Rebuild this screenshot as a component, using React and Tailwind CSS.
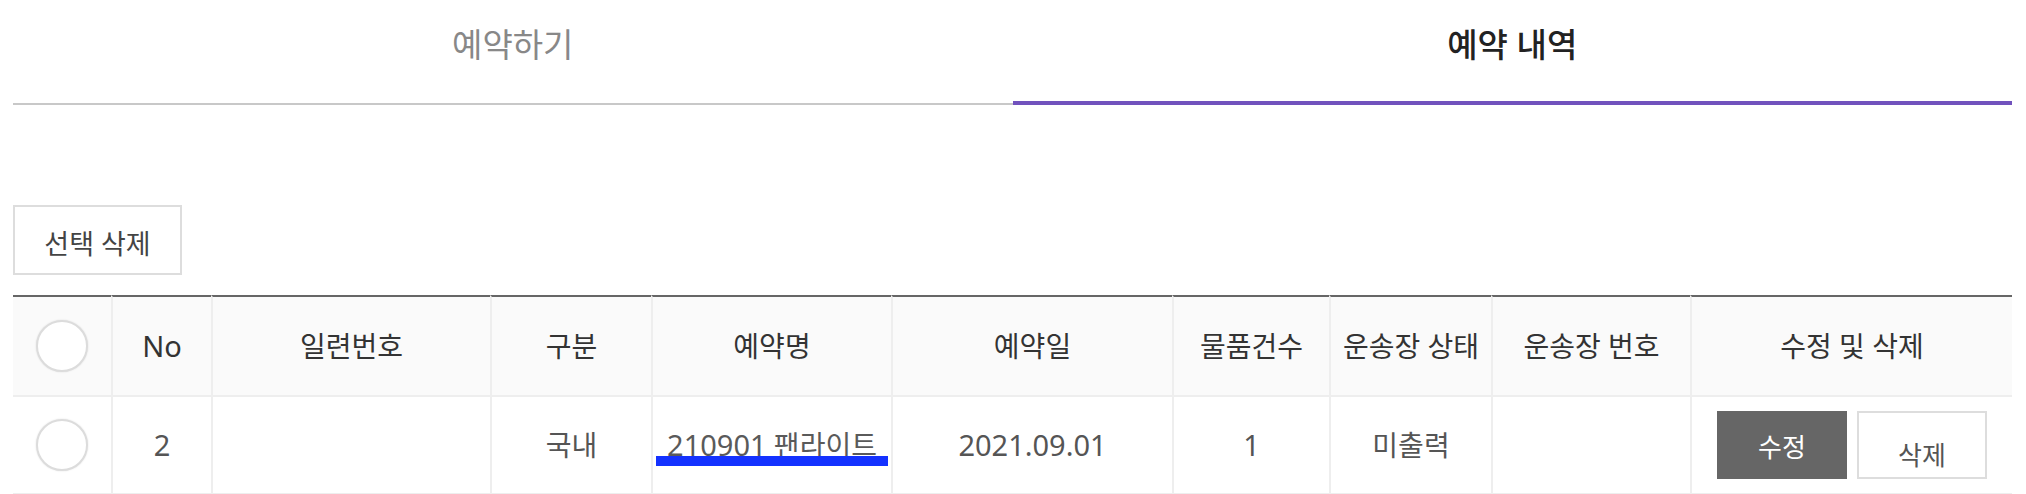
import React from "react";

const FONT = "font-['Noto_Sans','Noto_Sans_CJK_KR',sans-serif]";
const GRID =
  "grid grid-cols-[98px_100px_279px_161px_240px_281px_157px_162px_199px_322px]";

function Circle() {
  return (
    <span className="block w-[52px] h-[52px] rounded-full border-2 border-[#dcdcdc] bg-white shadow-[0_0_2px_rgba(0,0,0,0.12)]" />
  );
}

function Lat({ children }) {
  return <span className="text-[29px]">{children}</span>;
}

const headers = [
  null,
  <Lat key="no">No</Lat>,
  "일련번호",
  "구분",
  "예약명",
  "예약일",
  "물품건수",
  "운송장 상태",
  "운송장 번호",
  "수정 및 삭제",
];

export default function App() {
  return (
    <div className={`${FONT} w-[2026px] h-[494px] overflow-hidden bg-white pl-[13px] pr-[14px]`}>
      {/* Tabs */}
      <div className="flex">
        <div className="flex-1 h-[105px] border-b-2 border-[#c8c8c8] flex justify-center pt-[24px]">
          <span className="text-[33px] leading-[42px] text-[#888]">예약하기</span>
        </div>
        <div className="flex-1 h-[105px] border-b-4 border-[#7152bd] flex justify-center pt-[24px]">
          <span className="text-[33px] leading-[42px] text-[#222] font-medium">예약 내역</span>
        </div>
      </div>

      {/* Select delete button */}
      <div className="mt-[100px]">
        <button className="w-[169px] h-[70px] border-2 border-[#dddddd] bg-white flex items-center justify-center pt-[14px]">
          <span className="text-[27px] leading-[36px] text-[#444] -translate-y-[3px]">선택 삭제</span>
        </button>
      </div>

      {/* Table */}
      <div className="mt-[20px]">
        <div className={GRID}>
          {headers.map((h, i) => (
            <div
              key={i}
              className={`h-[102px] flex items-center justify-center bg-[#fafafa] border-t-2 border-t-[#666] border-b-2 border-b-[#eeeeee] text-[28px] text-[#333] ${
                i > 0 ? "border-l-2 border-l-[#eeeeee]" : ""
              }`}
            >
              {i === 0 ? <Circle /> : h}
            </div>
          ))}
        </div>
        <div className={`${GRID} text-[28px] text-[#555]`}>
          <div className="h-[98px] flex items-center justify-center border-b-2 border-[#eeeeee]">
            <Circle />
          </div>
          <div className="h-[98px] flex items-center justify-center border-l-2 border-b-2 border-[#eeeeee]">
            <Lat>2</Lat>
          </div>
          <div className="h-[98px] border-l-2 border-b-2 border-[#eeeeee]" />
          <div className="h-[98px] flex items-center justify-center border-l-2 border-b-2 border-[#eeeeee]">
            국내
          </div>
          <div className="h-[98px] flex items-center justify-center border-l-2 border-b-2 border-[#eeeeee]">
            <a href="#" className="relative inline-block leading-[36px] text-[#5a5a5a] underline decoration-[#888] underline-offset-4">
              <Lat>210901</Lat> 팬라이트
              <span className="absolute left-[-11px] right-[-11px] top-[29px] h-[10px] bg-[#1432ff]" />
            </a>
          </div>
          <div className="h-[98px] flex items-center justify-center border-l-2 border-b-2 border-[#eeeeee]">
            <Lat>2021.09.01</Lat>
          </div>
          <div className="h-[98px] flex items-center justify-center border-l-2 border-b-2 border-[#eeeeee]">
            <Lat>1</Lat>
          </div>
          <div className="h-[98px] flex items-center justify-center border-l-2 border-b-2 border-[#eeeeee]">
            미출력
          </div>
          <div className="h-[98px] border-l-2 border-b-2 border-[#eeeeee]" />
          <div className="h-[98px] flex items-center justify-center gap-[10px] border-l-2 border-b-2 border-[#eeeeee]">
            <button className="w-[130px] h-[68px] bg-[#666] text-white text-[26px] flex items-center justify-center pt-[4px]">
              수정
            </button>
            <button className="w-[130px] h-[68px] bg-white border-2 border-[#dddddd] text-[#555] text-[26px] flex items-center justify-center pt-[20px]">
              삭제
            </button>
          </div>
        </div>
      </div>
    </div>
  );
}
